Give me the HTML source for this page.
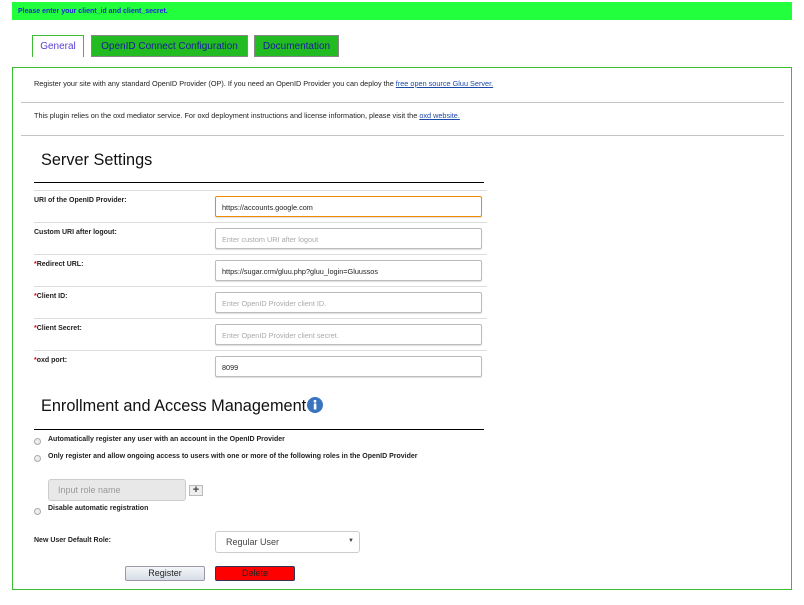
<!DOCTYPE html>
<html><head><meta charset="utf-8"><style>
*{box-sizing:border-box}
body{margin:0;width:804px;height:605px;background:#fff;font-family:"Liberation Sans",Arial,sans-serif;position:relative;overflow:hidden}
.a{position:absolute;white-space:nowrap}
.msg{left:12px;top:2px;width:780px;height:18px;background:#22ff3c;color:#2222dd;font-size:7px;font-weight:bold;padding:6px 0 0 6px}
.tab{top:35px;height:22px;font-size:10px;padding-top:5px;text-align:center;color:#1a1aa0}
.box{left:12px;top:67px;width:780px;height:523px;border:1px solid #3cbd33}
.sep{left:21px;width:763px;height:1px;background:#c4c4c4}
.p{left:34px;font-size:7.3px;color:#222}
.p a{color:#1b4aa8;text-decoration:underline}
h2{position:absolute;margin:0;font-weight:normal;font-size:16.3px;color:#111;white-space:nowrap}
.bl{left:34px;width:450px;height:1px;background:#000}
.rl{left:34px;width:453px;height:1px;background:#ddd}
.lb{left:34px;font-size:7px;font-weight:bold;color:#222}
.lb i{color:#d00;font-style:normal}
.in{left:215px;width:267px;height:21px;border:1px solid #bbb;border-radius:2px;font-size:7.3px;color:#aaa;padding:6px 0 0 6px;box-shadow:0 1px 1px #ddd}
.in.v{color:#222}
.rd{left:34px;width:7px;height:7px;border:1px solid #aaa;border-radius:50%;background:#eee}
.rt{left:48px;font-size:7px;font-weight:bold;color:#222}
</style></head><body>
<div class="a msg">Please enter your client_id and client_secret.</div>
<div class="a tab" style="left:32px;width:52px;border:1px solid #3cbd33;border-bottom:none;background:#fff;color:#5b3cd8">General</div>
<div class="a tab" style="left:91px;width:157px;background:#22bb22;border:1px solid #888">OpenID Connect Configuration</div>
<div class="a tab" style="left:254px;width:85px;background:#22bb22;border:1px solid #888">Documentation</div>
<div class="a box"></div>
<div class="a p" style="top:79px">Register your site with any standard OpenID Provider (OP). If you need an OpenID Provider you can deploy the <a>free open source Gluu Server.</a></div>
<div class="a sep" style="top:102px"></div>
<div class="a p" style="top:111px">This plugin relies on the oxd mediator service. For oxd deployment instructions and license information, please visit the <a>oxd website.</a></div>
<div class="a sep" style="top:135px"></div>
<h2 style="left:41px;top:151px">Server Settings</h2>
<div class="a bl" style="top:182px"></div>
<div class="a rl" style="top:190px"></div>
<div class="a lb" style="top:197px">URI of the OpenID Provider:</div>
<div class="a in v" style="top:196px;border-color:#f08a00">https://accounts.google.com</div>
<div class="a rl" style="top:222px"></div>
<div class="a lb" style="top:229px">Custom URI after logout:</div>
<div class="a in" style="top:228px">Enter custom URI after logout</div>
<div class="a rl" style="top:254px"></div>
<div class="a lb" style="top:261px"><i>*</i>Redirect URL:</div>
<div class="a in v" style="top:260px">https://sugar.crm/gluu.php?gluu_login=Gluussos</div>
<div class="a rl" style="top:286px"></div>
<div class="a lb" style="top:293px"><i>*</i>Client ID:</div>
<div class="a in" style="top:292px">Enter OpenID Provider client ID.</div>
<div class="a rl" style="top:318px"></div>
<div class="a lb" style="top:325px"><i>*</i>Client Secret:</div>
<div class="a in" style="top:324px">Enter OpenID Provider client secret.</div>
<div class="a rl" style="top:350px"></div>
<div class="a lb" style="top:357px"><i>*</i>oxd port:</div>
<div class="a in v" style="top:356px">8099</div>
<h2 style="left:41px;top:397px">Enrollment and Access Management</h2>
<svg class="a" style="left:307px;top:397px" width="16" height="16" viewBox="0 0 16 16"><circle cx="8" cy="8" r="8" fill="#3a74c0"/><rect x="6.8" y="6.5" width="2.6" height="6" fill="#fff"/><circle cx="8" cy="4.3" r="1.4" fill="#fff"/></svg>
<div class="a bl" style="top:429px"></div>
<div class="a rd" style="top:438px"></div>
<div class="a rt" style="top:436px">Automatically register any user with an account in the OpenID Provider</div>
<div class="a rd" style="top:455px"></div>
<div class="a rt" style="top:453px">Only register and allow ongoing access to users with one or more of the following roles in the OpenID Provider</div>
<div class="a" style="left:48px;top:479px;width:138px;height:22px;background:#e8e8e8;border:1px solid #ccc;border-radius:3px;font-size:9px;color:#999;padding:5px 0 0 9px">Input role name</div>
<div class="a" style="left:189px;top:485px;width:14px;height:11px;background:#eee;border:1px solid #bbb;font-size:11px;line-height:9px;text-align:center;font-weight:bold;color:#444">+</div>
<div class="a rd" style="top:508px"></div>
<div class="a rt" style="top:505px">Disable automatic registration</div>
<div class="a lb" style="top:537px">New User Default Role:</div>
<div class="a" style="left:215px;top:531px;width:145px;height:22px;border:1px solid #ccc;border-radius:3px;font-size:9px;color:#444;padding:5px 0 0 10px">Regular User<span style="position:absolute;right:5px;top:6px;font-size:6px">▼</span></div>
<div class="a" style="left:125px;top:566px;width:80px;height:15px;border:1px solid #99a;border-radius:2px;background:linear-gradient(#f4f6f8,#d6dde6);font-size:9px;text-align:center;padding-top:1px;color:#222">Register</div>
<div class="a" style="left:215px;top:566px;width:80px;height:15px;border:1px solid #335;border-radius:2px;background:#ff0000;font-size:9px;text-align:center;padding-top:1px;color:#222">Delete</div>
</body></html>
